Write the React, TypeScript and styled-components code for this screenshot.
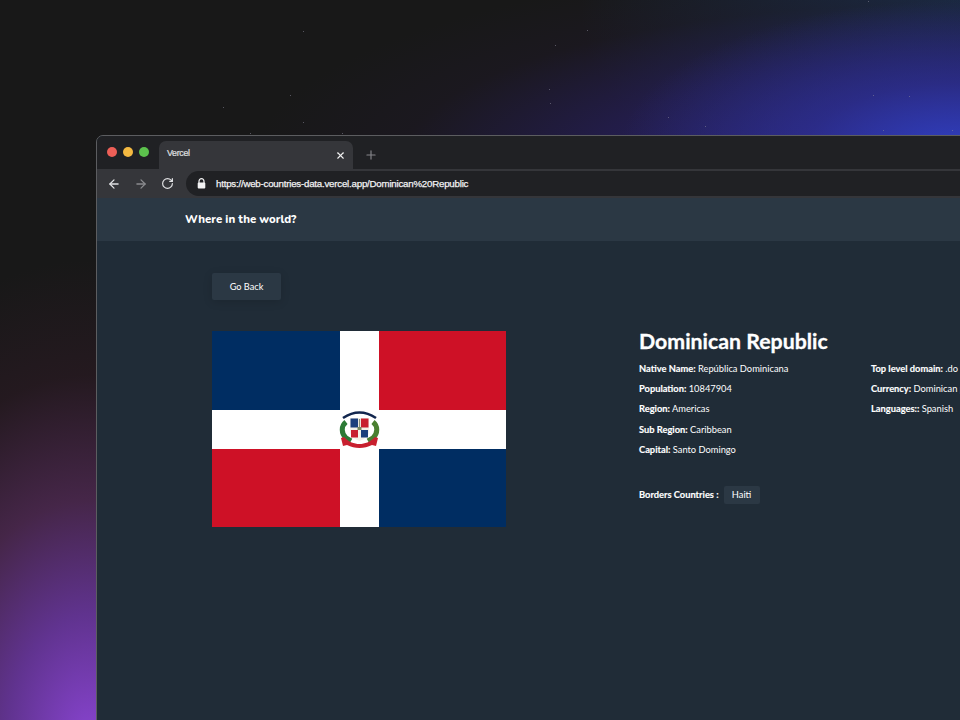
import React from "react";
import styled, { createGlobalStyle } from "styled-components";
import { ArrowLeft, ArrowRight, RotateCw, X, Plus } from "lucide-react";

const Global = createGlobalStyle`
  html, body { margin: 0; padding: 0; background: #181818; }
  #root { width: 960px; height: 720px; overflow: hidden; }
`;

const Stage = styled.div`
  position: relative;
  width: 960px;
  height: 720px;
  overflow: hidden;
  box-sizing: border-box;
  padding: 135px 0 0 96px;
  background:
    radial-gradient(ellipse 340px 150px at 960px 150px, rgba(48, 64, 195, 0.95) 0%, rgba(46, 50, 160, 0.6) 45%, rgba(40, 40, 120, 0) 100%),
    radial-gradient(ellipse 680px 205px at 930px 165px, rgba(46, 38, 130, 0.95) 0%, rgba(38, 30, 90, 0.72) 50%, rgba(32, 24, 44, 0.35) 78%, rgba(24, 24, 24, 0) 100%),
    radial-gradient(ellipse 380px 240px at 960px 0px, rgba(24, 52, 84, 0.85) 0%, rgba(24, 40, 70, 0) 100%),
    radial-gradient(ellipse 320px 480px at 90px 740px, rgba(136, 68, 208, 1) 0%, rgba(104, 54, 156, 0.9) 26%, rgba(82, 42, 86, 0.78) 50%, rgba(44, 26, 36, 0.6) 76%, rgba(24, 24, 24, 0) 100%),
    #181818;
`;

const Stars = styled.svg`
  position: absolute;
  inset: 0;
  pointer-events: none;
`;

const BrowserWindow = styled.div`
  position: relative;
  display: flex;
  flex-direction: column;
  width: 1100px;
  height: 640px;
  box-sizing: border-box;
  border: 1px solid #5c5d60;
  border-radius: 7px 0 0 0;
  overflow: hidden;
  background: #202c37;
`;

const TabStrip = styled.div`
  display: flex;
  align-items: flex-end;
  height: 33px;
  flex: none;
  background: #202124;
  padding-left: 10px;
`;

const Dots = styled.div`
  display: flex;
  gap: 6px;
  align-self: flex-start;
  margin-top: 11px;
  width: 52px;
`;

const Dot = styled.span<{ $c: string }>`
  width: 10px;
  height: 10px;
  border-radius: 50%;
  background: ${(p) => p.$c};
`;

const Tab = styled.div`
  display: flex;
  align-items: center;
  justify-content: space-between;
  box-sizing: border-box;
  width: 194px;
  height: 28px;
  padding: 0 7px 4px 8px;
  border-radius: 7px 7px 0 0;
  background: #35363a;
  color: #e0e1e3;
  font: 8.8px "Liberation Sans", Arial, sans-serif;
  letter-spacing: -0.3px;
  -webkit-text-stroke: 0.2px #e0e1e3;
`;

const TabClose = styled.span`
  display: flex;
  margin-top: 4px;
  color: #f0f0f0;
`;

const NewTab = styled.span`
  display: flex;
  margin: 0 0 7px 11px;
  color: #85868a;
`;

const Toolbar = styled.div`
  display: flex;
  align-items: center;
  height: 29px;
  flex: none;
  background: #35363a;
  padding-left: 10px;
`;

const NavButton = styled.span<{ $dim?: boolean }>`
  display: flex;
  width: 27px;
  color: ${(p) => (p.$dim ? "#8a8b8e" : "#e0e1e3")};
`;

const UrlBar = styled.div`
  display: flex;
  align-items: center;
  flex: 1;
  height: 25px;
  margin-left: -2px;
  padding-left: 11px;
  border-radius: 13px 0 0 13px;
  background: #202124;
  color: #f2f2f3;
  font: 9.7px "Liberation Sans", Arial, sans-serif;
  letter-spacing: -0.21px;
  -webkit-text-stroke: 0.25px #f2f2f3;
`;

const LockIcon = styled.svg`
  flex: none;
  width: 9px;
  height: 11px;
  margin-right: 10px;
`;

const SiteHeader = styled.header`
  display: flex;
  align-items: center;
  height: 43px;
  flex: none;
  box-sizing: border-box;
  padding: 0 0 1px 88px;
  background: #2b3844;
  color: #fff;
  font: 800 11.4px Nunito, "Open Sans", sans-serif;
`;

const Main = styled.main`
  flex: 1;
  padding: 32px 0 0 115px;
  color: #fff;
  font-family: Lato, sans-serif;
`;

const BackButton = styled.button`
  display: block;
  width: 69px;
  height: 27px;
  padding: 0 0 1px;
  border: 0;
  border-radius: 2px;
  background: #2b3844;
  box-shadow: 0 2px 10px rgba(0, 0, 0, 0.14);
  color: #fff;
  font: 9.2px Lato, sans-serif;
`;

const Content = styled.div`
  display: flex;
  margin-top: 31px;
`;

const Flag = styled.svg`
  display: block;
  flex: none;
  width: 294px;
  height: 196px;
`;

const Details = styled.section`
  margin-left: 133px;
`;

const Title = styled.h1`
  margin: 0;
  font: 700 21.3px/21px Lato, sans-serif;
  -webkit-text-stroke: 0.3px #fff;
`;

const Columns = styled.div`
  display: grid;
  grid-template-columns: 232px 232px;
  margin-top: 11px;
`;

const Column = styled.div`
  display: flex;
  flex-direction: column;
  gap: 8.2px;
`;

const Row = styled.p`
  margin: 0;
  font-size: 9.3px;
  line-height: 12px;
  white-space: nowrap;
`;

const Label = styled.strong`
  font-weight: 700;
  -webkit-text-stroke: 0.15px #fff;
`;

const Borders = styled.div`
  display: flex;
  align-items: center;
  gap: 5px;
  margin-top: 30px;
  font-size: 9.3px;
`;

const Chip = styled.span`
  display: flex;
  align-items: center;
  justify-content: center;
  width: 36px;
  height: 18px;
  border-radius: 2px;
  background: #2b3844;
`;

const stars: [number, number][] = [
  [303, 31], [587, 30], [555, 45], [290, 95], [549, 89], [873, 95], [550, 103], [223, 107], [303, 122],
  [668, 117], [705, 126], [883, 130], [250, 133], [342, 133], [909, 96], [952, 130], [868, 1],
];

const rows = [
  ["Native Name:", "República Dominicana"],
  ["Population:", "10847904"],
  ["Region:", "Americas"],
  ["Sub Region:", "Caribbean"],
  ["Capital:", "Santo Domingo"],
];

const rows2 = [
  ["Top level domain:", ".do"],
  ["Currency:", "Dominican peso"],
  ["Languages::", "Spanish"],
];

export default function App() {
  return (
    <Stage>
      <Global />
      <Stars width="960" height="720">
        {stars.map(([x, y], i) => (
          <rect key={i} x={x} y={y} width="1" height="1" fill="#8d8a9c" opacity="0.55" />
        ))}
      </Stars>
      <BrowserWindow>
        <TabStrip>
          <Dots>
            <Dot $c="#ed5f57" />
            <Dot $c="#f4b941" />
            <Dot $c="#5cc24d" />
          </Dots>
          <Tab>
            Vercel
            <TabClose>
              <X size={11} strokeWidth={2.4} />
            </TabClose>
          </Tab>
          <NewTab>
            <Plus size={14} strokeWidth={2} />
          </NewTab>
        </TabStrip>
        <Toolbar>
          <NavButton>
            <ArrowLeft size={14} strokeWidth={2.2} />
          </NavButton>
          <NavButton $dim>
            <ArrowRight size={14} strokeWidth={2.2} />
          </NavButton>
          <NavButton>
            <RotateCw size={13} strokeWidth={2.2} />
          </NavButton>
          <UrlBar>
            <LockIcon viewBox="0 0 9 11">
              <path d="M2 5V3.200a2.500 2.500 0 0 1 5 0V5" fill="none" stroke="#f2f2f3" strokeWidth="1.200" />
              <rect x="0.700" y="4.600" width="7.600" height="6" rx="1" fill="#f2f2f3" />
            </LockIcon>
            https://web-countries-data.vercel.app/Dominican%20Republic
          </UrlBar>
        </Toolbar>
        <SiteHeader>Where in the world?</SiteHeader>
        <Main>
          <BackButton>Go Back</BackButton>
          <Content>
            <Flag viewBox="0 0 294 196" aria-label="Flag of the Dominican Republic">
              <rect width="294" height="196" fill="#fff" />
              <rect x="0" y="0" width="128" height="79" fill="#002d62" />
              <rect x="167" y="0" width="127" height="79" fill="#ce1126" />
              <rect x="0" y="118" width="128" height="78" fill="#ce1126" />
              <rect x="167" y="118" width="127" height="78" fill="#002d62" />
              <path d="M131 87 Q147.500 76 164 87" fill="none" stroke="#12264e" strokeWidth="2.600" />
              <path d="M134 91c-5 4-5 11 0 16l5 3" fill="none" stroke="#2c7a36" strokeWidth="5" />
              <path d="M161 91c5 4 5 11 0 16l-5 3" fill="none" stroke="#4a7f30" strokeWidth="5" />
              <path d="M138 87h19v13c0 6-5 8-9.500 10-4.500-2-9.500-4-9.500-10z" fill="#f4f1e8" />
              <rect x="138.500" y="87.500" width="7.500" height="9" fill="#1c3f7c" />
              <rect x="149" y="87.500" width="7.500" height="9" fill="#c8202f" />
              <rect x="139" y="99" width="7" height="7.500" fill="#c8202f" />
              <rect x="149" y="99" width="7" height="7.500" fill="#1c3f7c" />
              <path d="M147.500 88v9" stroke="#8a9078" strokeWidth="1.200" />
              <rect x="145.500" y="96" width="4" height="3" fill="#7a8a60" />
              <path d="M129 107l3-1c5 5 10 7 15.500 7s10.500-2 15.500-7l3 1-2 8-4-1c-4 2-8 3-12.500 3s-8.500-1-12.500-3l-4 1z" fill="#c8202f" />
            </Flag>
            <Details>
              <Title>Dominican Republic</Title>
              <Columns>
                <Column>
                  {rows.map(([k, v]) => (
                    <Row key={k}>
                      <Label>{k}</Label> {v}
                    </Row>
                  ))}
                </Column>
                <Column>
                  {rows2.map(([k, v]) => (
                    <Row key={k}>
                      <Label>{k}</Label> {v}
                    </Row>
                  ))}
                </Column>
              </Columns>
              <Borders>
                <Label>Borders Countries :</Label>
                <Chip>Haiti</Chip>
              </Borders>
            </Details>
          </Content>
        </Main>
      </BrowserWindow>
    </Stage>
  );
}
